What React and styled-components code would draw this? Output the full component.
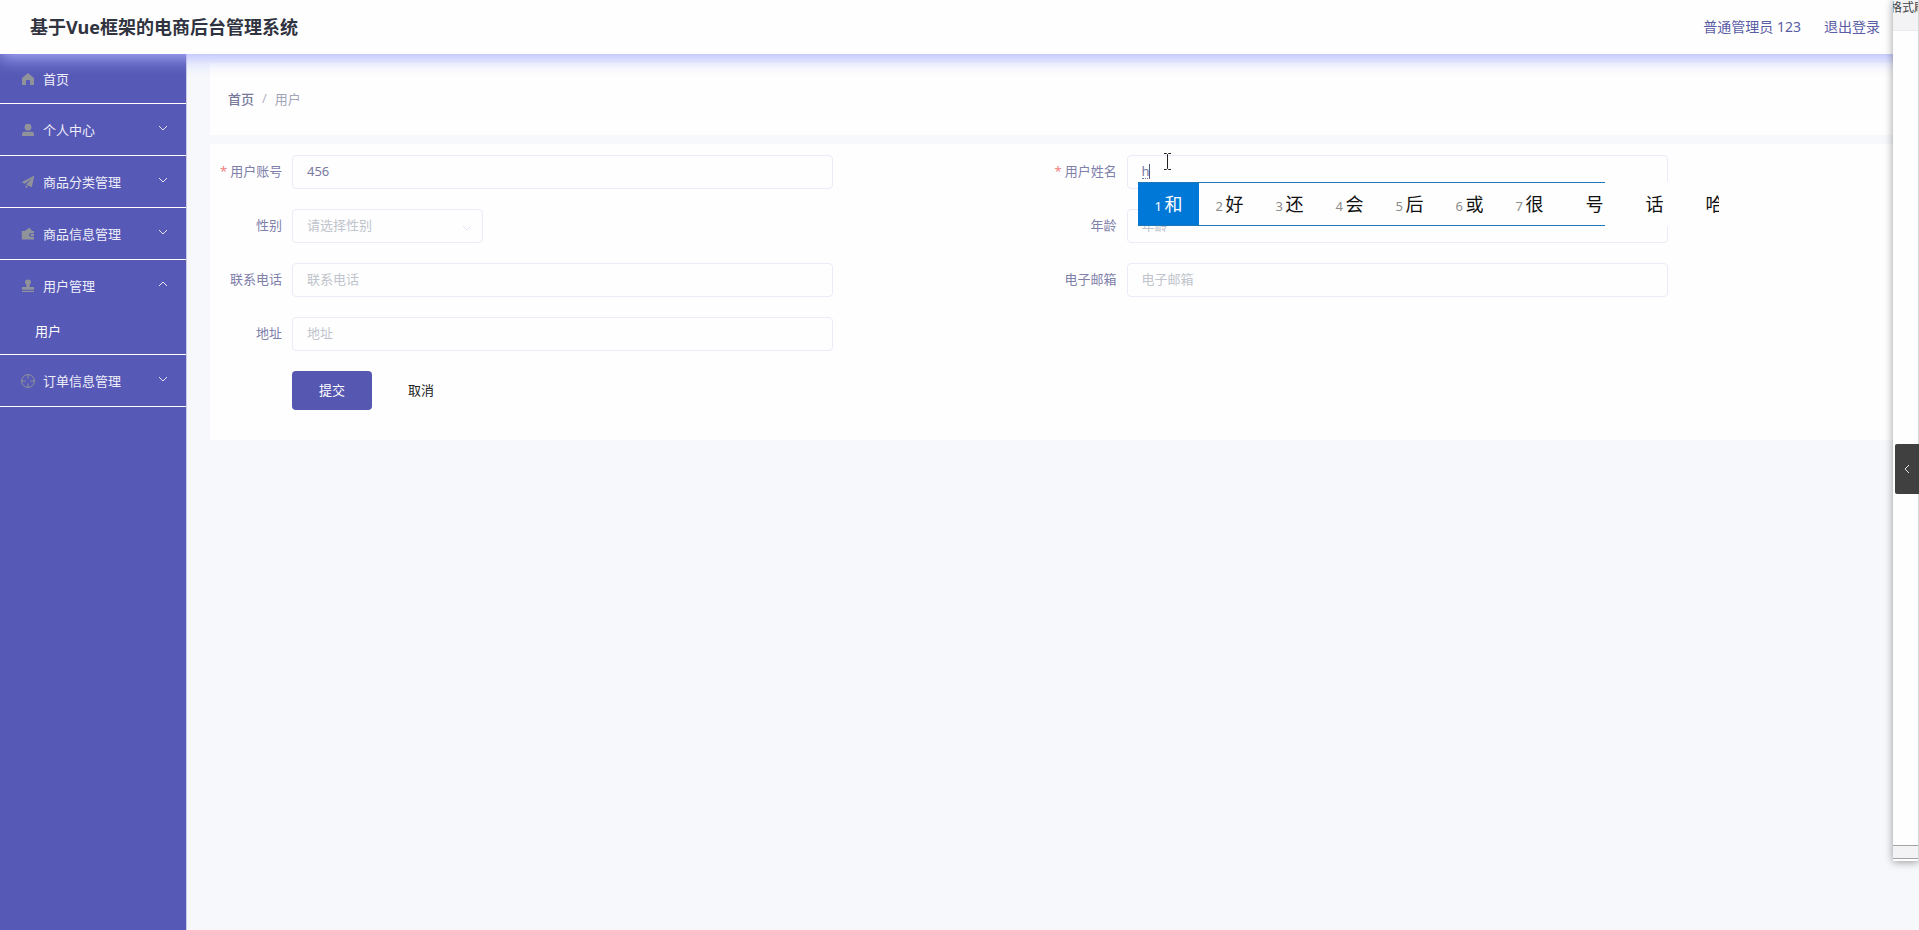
import React from 'react';
import styled, {createGlobalStyle} from 'styled-components';

const menu = [
    {title: '个人中心', icon: 'user'},
    {title: '商品分类管理', icon: 'plane'},
    {title: '商品信息管理', icon: 'wallet'},
    {title: '用户管理', icon: 'stamp', children: ['用户']},
    {title: '订单信息管理', icon: 'aim'},
];

const fields = [
    {name: 'account', label: '用户账号', required: true, value: '456'},
    {name: 'fullname', label: '用户姓名', required: true, value: 'h', composing: true},
    {name: 'sex', label: '性别', type: 'select', placeholder: '请选择性别'},
    {name: 'age', label: '年龄', placeholder: '年龄'},
    {name: 'phone', label: '联系电话', placeholder: '联系电话'},
    {name: 'email', label: '电子邮箱', placeholder: '电子邮箱'},
    {name: 'address', label: '地址', placeholder: '地址'},
];

const candidates = ['和', '好', '还', '会', '后', '或', '很', '号', '话', '哈'];

const MenuIcon = ({name}) => (
    <IconSvg viewBox="0 0 14 14" aria-hidden="true">
        {name === 'home' && <path d="M7 1 L13 6 V13 H9 V9 Q9 8 8 8 H6 Q5 8 5 9 V13 H1 V6 Z"/>}
        {name === 'user' && (
            <>
                <circle cx="7" cy="4.2" r="3.4"/>
                <path d="M1 13 V11.2 Q1 8.8 3.4 8.8 H10.6 Q13 8.8 13 11.2 V13 Z"/>
            </>
        )}
        {name === 'plane' && (
            <>
                <path d="M13.4 0.6 L0.6 7.2 L3.8 8.8 L10.6 3.6 L5.2 9.6 L10.8 12.2 Z"/>
                <path d="M4.6 10.2 L7 11.2 L4.8 13.4 Z"/>
            </>
        )}
        {name === 'wallet' && (
            <path fillRule="evenodd" d="M0.8 4 H3.5 L8.6 0.8 L11 4 H13 V6.2 H9.6 Q8 6.4 8 8 Q8 9.6 9.6 9.8 H13 V12.6 H0.8 Z M9.8 7.1 H13 V8.9 H9.8 Q9 8 9.8 7.1 Z"/>
        )}
        {name === 'stamp' && (
            <>
                <path d="M7 0.6 Q10.2 0.8 10 3.6 Q9.8 5 8.6 6 V8 H13 V10.8 H1 V8 H5.4 V6 Q4.2 5 4 3.6 Q3.8 0.8 7 0.6 Z"/>
                <path d="M1 11.8 H13 V13 H1 Z"/>
            </>
        )}
        {name === 'aim' && (
            <g fill="none" stroke="currentColor">
                <circle cx="7" cy="7" r="6.4"/>
                <path d="M7 0.6 V4.6 M7 9.4 V13.4 M0.6 7 H4.6 M9.4 7 H13.4"/>
            </g>
        )}
    </IconSvg>
);

const Field = ({field}) => (
    <FormItem>
        <Label htmlFor={field.name}>
            {field.required && <Star>*</Star>}
            {field.label}
        </Label>
        <Control $narrow={field.type === 'select'}>
            {field.type === 'select' ? (
                <>
                    <Select id={field.name} defaultValue="">
                        <option value="">{field.placeholder}</option>
                        <option value="男">男</option>
                        <option value="女">女</option>
                    </Select>
                    <SelectArrow viewBox="0 0 10 6"><path d="M1 1 L5 5 L9 1"/></SelectArrow>
                </>
            ) : (
                <Input id={field.name} type="text" defaultValue={field.value} placeholder={field.placeholder}/>
            )}
            {field.composing && (
                <>
                    <Composition/>
                    <Pointer viewBox="0 0 9 17"><path d="M1 0.5 H3.5 L4.5 1.5 L5.5 0.5 H8 M4.5 1.5 V15.5 M1 16.5 H3.5 L4.5 15.5 L5.5 16.5 H8"/></Pointer>
                    <Ime>
                        <Candidates>
                            {candidates.map((word, i) => (
                                <Candidate key={word} $active={i === 0}>
                                    <Digit>{i < 7 ? i + 1 : ''}</Digit>
                                    {word}
                                </Candidate>
                            ))}
                        </Candidates>
                    </Ime>
                </>
            )}
        </Control>
    </FormItem>
);

const App = () => {
    return (
        <Page>
            <GlobalStyle/>
            <Header>
                <Title>基于Vue框架的电商后台管理系统</Title>
                <HeaderLinks>
                    <HeaderLink href="#user">普通管理员 123</HeaderLink>
                    <HeaderLink href="#logout">退出登录</HeaderLink>
                </HeaderLinks>
            </Header>
            <Body>
                <Sidebar>
                    <MenuGroup>
                        <MenuButton type="button" $home>
                            <MenuIcon name="home"/>
                            <MenuText>首页</MenuText>
                        </MenuButton>
                    </MenuGroup>
                    {menu.map((item) => (
                        <MenuGroup key={item.title}>
                            <MenuButton type="button" aria-expanded={Boolean(item.children)}>
                                <MenuIcon name={item.icon}/>
                                <MenuText>{item.title}</MenuText>
                                <Chevron viewBox="0 0 10 6">
                                    <path d={item.children ? 'M1 5 L5 1 L9 5' : 'M1 1 L5 5 L9 1'}/>
                                </Chevron>
                            </MenuButton>
                            {item.children && item.children.map((child) => (
                                <SubLink key={child} href="#users">{child}</SubLink>
                            ))}
                        </MenuGroup>
                    ))}
                </Sidebar>
                <Main>
                    <Breadcrumb>
                        <Crumb href="#home">首页</Crumb>
                        <Slash>/</Slash>
                        <span>用户</span>
                    </Breadcrumb>
                    <FormCard>
                        <Fields>
                            {fields.map((field) => <Field key={field.name} field={field}/>)}
                        </Fields>
                        <Actions>
                            <Button type="button" $primary>提交</Button>
                            <Button type="button">取消</Button>
                        </Actions>
                    </FormCard>
                </Main>
            </Body>
            <SideWindow>
                <WindowBar>格式刷</WindowBar>
                <WindowStatus/>
            </SideWindow>
            <Drawer type="button" aria-label="展开">
                <DrawerArrow viewBox="0 0 6 10"><path d="M5 1 L1 5 L5 9"/></DrawerArrow>
            </Drawer>
        </Page>
    )
}

export default App;

const GlobalStyle = createGlobalStyle`
    body {
        margin: 0;
        background: #f6f8fc;
        overflow: hidden;
    }

    body, button, input, select {
        font-family: "Noto Sans", "Noto Sans CJK SC", sans-serif;
        font-size: 13px;
    }
`

const Page = styled.div`
    display: flex;
    flex-direction: column;
    min-height: 100vh;
    position: relative;
    overflow: hidden;
`

const Header = styled.header`
    display: flex;
    align-items: center;
    justify-content: space-between;
    height: 54px;
    padding: 0 39px 0 30px;
    box-sizing: border-box;
    background: #fefefe;
    box-shadow: 0 4px 16px rgba(174, 178, 255, 0.95);
    position: relative;
    z-index: 1;
`

const Title = styled.h1`
    margin: 0;
    font-size: 18px;
    line-height: 24px;
    color: #303340;
`

const HeaderLinks = styled.nav`
    display: flex;
    gap: 23px;
`

const HeaderLink = styled.a`
    font-size: 14px;
    line-height: 20px;
    color: #5a5ca5;
    text-decoration: none;
`

const Body = styled.div`
    display: flex;
    flex: 1;
`

const Sidebar = styled.aside`
    width: 187px;
    flex-shrink: 0;
    box-sizing: border-box;
    background: #5759b6;
    border-right: 1px solid #c9cae6;
`

const MenuGroup = styled.div`
    border-bottom: 1px solid #fff;
`

const MenuButton = styled.button`
    display: flex;
    align-items: center;
    width: 100%;
    height: ${props => props.$home ? '49px' : '51px'};
    padding: 0 18px 0 21px;
    border: 0;
    background: none;
    color: #eeeefa;
    text-align: left;
`

const MenuText = styled.span`
    flex: 1;
    line-height: 20px;
`

const IconSvg = styled.svg`
    width: 14px;
    height: 14px;
    margin-right: 8px;
    fill: currentColor;
    color: #909399;
`

const Chevron = styled.svg`
    width: 10px;
    height: 6px;
    margin-bottom: 4px;
    fill: none;
    stroke: #e6e6f7;
`

const SubLink = styled.a`
    display: block;
    height: 43px;
    padding-left: 35px;
    line-height: 40px;
    box-sizing: border-box;
    color: #fff;
    text-decoration: none;
`

const Main = styled.main`
    display: flex;
    flex-direction: column;
    flex: 1;
    gap: 9px;
    padding: 9px 20px 0 23px;
`

const Breadcrumb = styled.nav`
    display: flex;
    align-items: center;
    height: 72px;
    padding: 0 18px 2px;
    box-sizing: border-box;
    background: #fefefe;
    color: #a3a6b8;
`

const Crumb = styled.a`
    color: #77799b;
    font-weight: 500;
    text-decoration: none;
`

const Slash = styled.span`
    margin: 0 8px;
    color: #b0b2c2;
`

const FormCard = styled.form`
    padding: 11px 10px 30px;
    background: #fefefe;
`

const Fields = styled.div`
    display: grid;
    grid-template-columns: 1fr 1fr;
    row-gap: 20px;
`

const FormItem = styled.div`
    display: flex;
`

const Label = styled.label`
    width: 62px;
    margin-right: 10px;
    color: #7e80aa;
    line-height: 32px;
    text-align: right;
    white-space: nowrap;
`

const Star = styled.span`
    margin-right: 3px;
    color: #f08080;
`

const Control = styled.div`
    position: relative;
    width: ${props => props.$narrow ? '191px' : 'calc((100% - 72px) * 0.71)'};
`

const Input = styled.input`
    display: block;
    width: 100%;
    height: 34px;
    padding: 0 14px 2px;
    box-sizing: border-box;
    border: 1px solid #ebebfa;
    border-radius: 4px;
    outline: 0;
    background: #fefefe;
    color: #77799f;

    &::placeholder {
        color: #c0c4cc;
    }
`

const Select = styled.select`
    display: block;
    width: 100%;
    height: 34px;
    padding: 0 14px 2px;
    box-sizing: border-box;
    border: 1px solid #ebebfa;
    border-radius: 4px;
    background: #fefefe;
    color: #c0c4cc;
    appearance: none;
`

const SelectArrow = styled.svg`
    position: absolute;
    right: 11px;
    top: 16px;
    width: 10px;
    height: 6px;
    fill: none;
    stroke: #e4e4f5;
    pointer-events: none;
`

/* underline and caret of the text being typed */
const Composition = styled.span`
    position: absolute;
    left: 15px;
    top: 9px;
    width: 7px;
    height: 14px;
    border-right: 1px solid #55577f;
    border-bottom: 1px dotted #77799f;
`

const Pointer = styled.svg`
    position: absolute;
    left: 36px;
    top: -2px;
    width: 9px;
    height: 17px;
    fill: none;
    stroke: #222;
`

const Ime = styled.div`
    position: absolute;
    left: 11px;
    top: 27px;
    z-index: 2;
    width: 581px;
    overflow: hidden;
    background: #fefefe;
`

const Candidates = styled.ol`
    display: flex;
    width: 467px;
    height: 44px;
    margin: 0;
    padding: 0;
    box-sizing: border-box;
    border: solid #1f76b8;
    border-width: 1px 0;
    list-style: none;
`

const Candidate = styled.li`
    display: flex;
    align-items: baseline;
    flex: 0 0 ${props => props.$active ? '61px' : '60px'};
    padding-left: 17px;
    box-sizing: border-box;
    background: ${props => props.$active ? '#0078d7' : 'none'};
    color: ${props => props.$active ? '#fff' : '#111'};
    font-size: 18px;
    line-height: 42px;

    & > span {
        color: ${props => props.$active ? '#fff' : '#8c8c8c'};
    }
`

const Digit = styled.span`
    flex: 0 0 10px;
    font-size: 13px;
`

const Actions = styled.div`
    display: flex;
    gap: 9px;
    padding: 20px 0 0 72px;
`

const Button = styled.button`
    width: 80px;
    height: 39px;
    padding: 0 0 2px;
    border: 0;
    border-radius: 4px;
    background: ${props => props.$primary ? '#5657b0' : 'transparent'};
    color: ${props => props.$primary ? '#fff' : '#222'};
`

/* another window lying over the right edge of the page */
const SideWindow = styled.div`
    display: flex;
    flex-direction: column;
    justify-content: space-between;
    position: absolute;
    right: 0;
    top: 0;
    z-index: 3;
    width: 26px;
    height: 861px;
    box-sizing: border-box;
    border-right: 1px solid #d8d8dc;
    background: #fefefe;
    box-shadow: 0 1px 8px rgba(0, 0, 0, 0.4);
`

const WindowBar = styled.div`
    height: 30px;
    border-bottom: 1px solid #ececee;
    overflow: hidden;
    background: #f3f3f5;
    color: #444;
    font-size: 12px;
    line-height: 15px;
    text-indent: -3px;
    white-space: nowrap;
`

const WindowStatus = styled.div`
    height: 12px;
    margin-bottom: 2px;
    border: solid #a3a3a6;
    border-width: 1px 0;
    background: #f3f3f5;
`

const Drawer = styled.button`
    display: flex;
    align-items: center;
    justify-content: center;
    position: absolute;
    right: 0;
    top: 444px;
    z-index: 4;
    width: 24px;
    height: 50px;
    padding: 0;
    border: 0;
    border-radius: 2px 0 0 2px;
    background: #404040;
`

const DrawerArrow = styled.svg`
    width: 6px;
    height: 10px;
    fill: none;
    stroke: #e6e6e6;
`
